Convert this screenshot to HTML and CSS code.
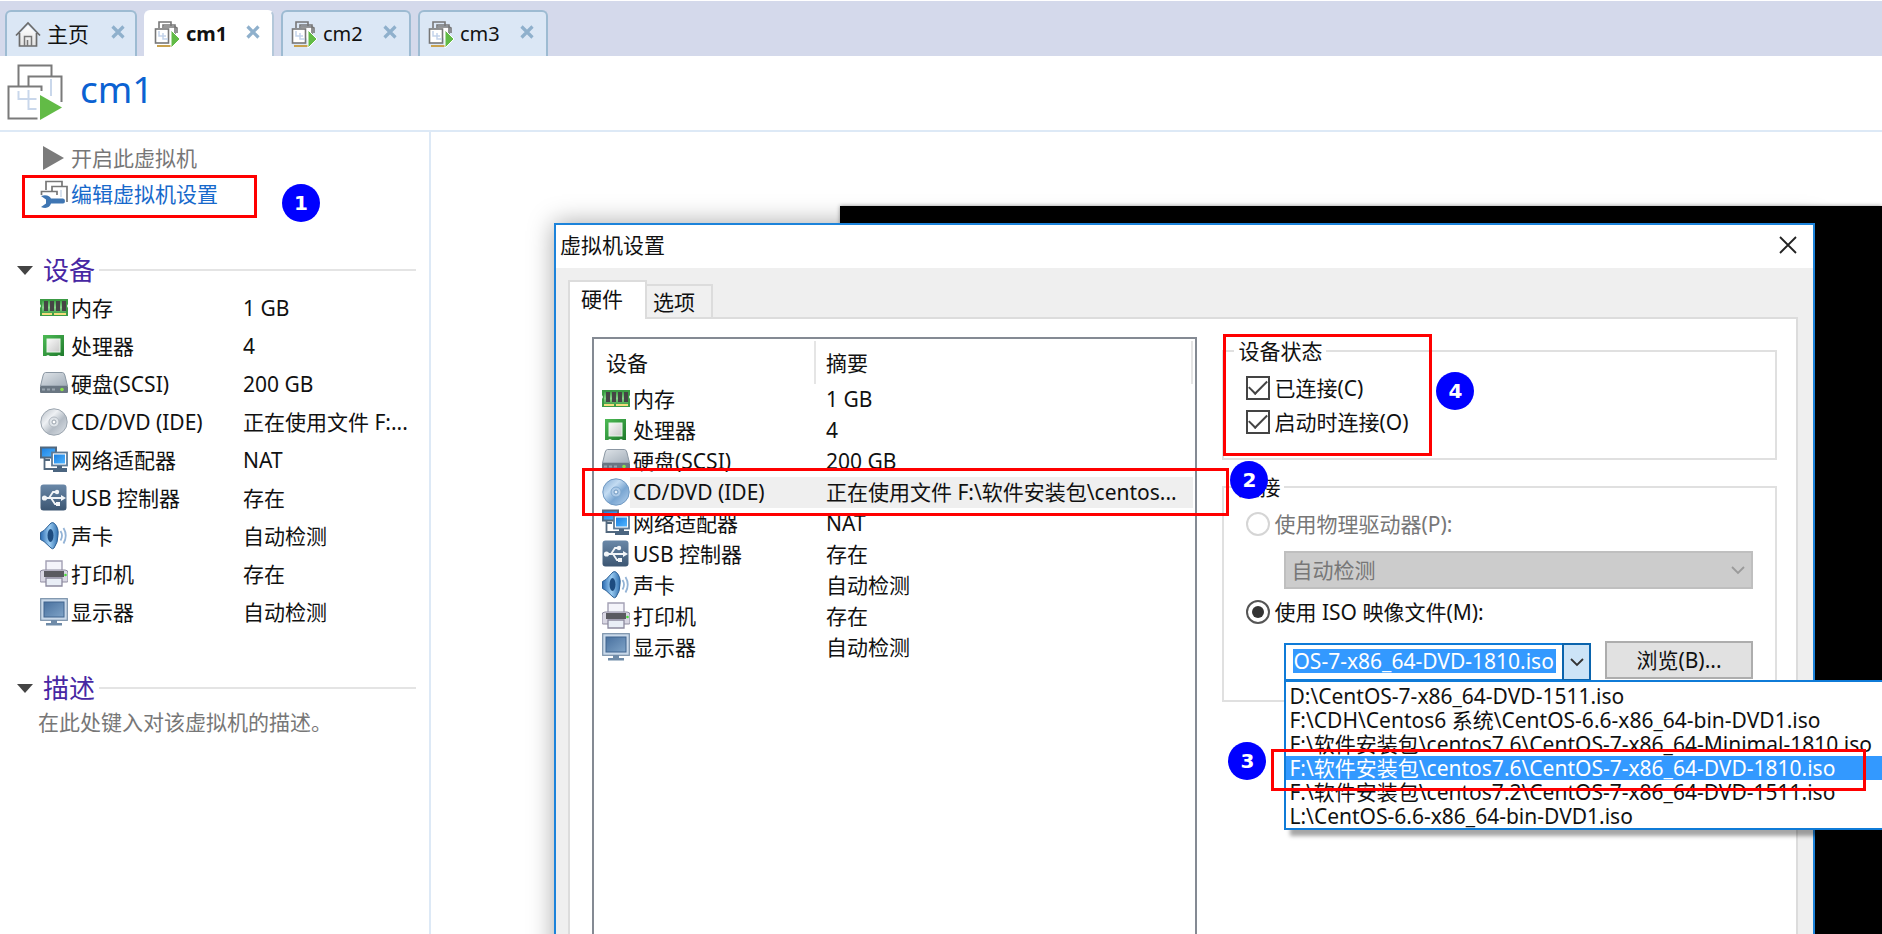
FILE: index.html
```html
<!DOCTYPE html>
<html lang="zh-CN">
<head>
<meta charset="utf-8">
<title>cm1 - 虚拟机设置</title>
<link rel="stylesheet" href="styles.css">
</head>
<body>
<svg class="sprite" width="0" height="0" aria-hidden="true">
  <defs>
    <linearGradient id="gHome" x1="0" y1="0" x2="0" y2="1"><stop offset="0" stop-color="#fff"/><stop offset="1" stop-color="#e3e3e3"/></linearGradient>
    <linearGradient id="gGreen" x1="0" y1="0" x2="1" y2="1"><stop offset="0" stop-color="#4dbb55"/><stop offset="1" stop-color="#1f7a2c"/></linearGradient>
    <linearGradient id="gMem" x1="0" y1="0" x2="0" y2="1"><stop offset="0" stop-color="#3fa548"/><stop offset=".5" stop-color="#86d488"/><stop offset="1" stop-color="#3a9a43"/></linearGradient>
    <linearGradient id="gChip" x1="0" y1="0" x2="1" y2="1"><stop offset="0" stop-color="#fafafa"/><stop offset="1" stop-color="#c9c9c9"/></linearGradient>
    <linearGradient id="gDisk" x1="0" y1="0" x2="1" y2="1"><stop offset="0" stop-color="#dfe4e9"/><stop offset="1" stop-color="#a3aeb9"/></linearGradient>
    <linearGradient id="gCd" x1="0" y1="0" x2="1" y2="1"><stop offset="0" stop-color="#b4bbc3"/><stop offset=".35" stop-color="#eef1f4"/><stop offset=".6" stop-color="#b4bcc5"/><stop offset="1" stop-color="#dfe4e9"/></linearGradient>
    <linearGradient id="gCdSel" x1="0" y1="0" x2="1" y2="1"><stop offset="0" stop-color="#7ea8d2"/><stop offset=".35" stop-color="#c4dcf2"/><stop offset=".6" stop-color="#7aa6d2"/><stop offset="1" stop-color="#b5d2ee"/></linearGradient>
    <linearGradient id="gBlue" x1="0" y1="0" x2="1" y2="1"><stop offset="0" stop-color="#1b7fe0"/><stop offset="1" stop-color="#4fb4ff"/></linearGradient>
    <linearGradient id="gUsb" x1="0" y1="0" x2="0" y2="1"><stop offset="0" stop-color="#6a88a8"/><stop offset="1" stop-color="#3c5672"/></linearGradient>
    <linearGradient id="gSnd" x1="0" y1="0" x2="1" y2="0"><stop offset="0" stop-color="#2b6cb3"/><stop offset=".5" stop-color="#9ccdf3"/><stop offset="1" stop-color="#2f6faf"/></linearGradient>
    <linearGradient id="gScr" x1="0" y1="0" x2="1" y2="1"><stop offset="0" stop-color="#49719f"/><stop offset="1" stop-color="#7fa3c7"/></linearGradient>
  </defs>
  <symbol id="i-home" viewBox="0 0 26 26">
    <path d="M4.500 13v12h17V13L13 4.500z" fill="url(#gHome)"/>
    <path d="M1 14.500 13 2l12 12.500M4.500 12v13h17V12" fill="none" stroke="#6b6b6b" stroke-width="1.700"/>
    <path d="M9.500 25v-9.500h7V25M12.500 25v-6" fill="none" stroke="#777" stroke-width="1.500"/>
  </symbol>
  <symbol id="i-vm" viewBox="0 0 26 28">
    <path d="M5 8V2h12v4M9 8V5h12v2l2 1v5" fill="none" stroke="#777" stroke-width="1.600"/>
    <path d="M10 7h11v14h-4" fill="#fff" stroke="#777" stroke-width="1.600"/>
    <rect x="1.500" y="9" width="13" height="14" fill="#fff" stroke="#777" stroke-width="1.600"/>
    <path d="M5 11v5h7M9 13v6h5" fill="none" stroke="#c3d3ea" stroke-width="1.500"/>
    <path d="M3 26h14" stroke="#c9a14c" stroke-width="2"/>
    <path d="M17 10v18l9-9z" fill="#62bb46" stroke="#fff" stroke-width="1"/>
  </symbol>
  <symbol id="i-vm-big" viewBox="0 0 56 56">
    <path d="M11.500 22V1.500h33V12" fill="none" stroke="#7a7a7a" stroke-width="2"/>
    <path d="M21.500 22V12.500h33V38" fill="none" stroke="#7a7a7a" stroke-width="2"/>
    <path d="M44 15v17" stroke="#c9d7eb" stroke-width="2"/>
    <path d="M34.500 27v-4.500h-33v32h29" fill="none" stroke="#7a7a7a" stroke-width="2"/>
    <path d="M11.500 27v8h18M21.500 26v19h8" fill="none" stroke="#c9d7eb" stroke-width="2"/>
    <path d="M33 31v25l22-12.500z" fill="#62bb46"/>
  </symbol>
  <symbol id="i-close" viewBox="0 0 14 14"><path d="M1.500 1.500l11 11M12.500 1.500l-11 11" stroke="#8fb0cc" stroke-width="3.200"/></symbol>
  <symbol id="i-play" viewBox="0 0 28 28"><path d="M3 2v24l21-12z" fill="#7b7b7b"/></symbol>
  <symbol id="i-edit" viewBox="0 0 28 28">
    <path d="M6 10V1.500h16V7M12 12V6.500h15V22M1.500 15v-3.500H17V15" fill="none" stroke="#777" stroke-width="1.700"/>
    <path d="M21 10v7" stroke="#cbd8ea" stroke-width="1.500"/>
    <path d="M1 16c5-2 9 0 10 2.500h12q2 0 2 2.500t-2 2.500H11c-1 4-5 5.500-10 3.500l5-3.500v-4z" fill="#3f76b3"/>
  </symbol>
  <symbol id="i-mem" viewBox="0 0 28 28">
    <path d="M0 5h28v5l-1 2 1 2v8H0v-8l1-2-1-2z" fill="#3b9a44"/>
    <path d="M2 7h24v13H2z" fill="url(#gMem)"/>
    <path d="M4 7h4v10H4zM10 7h4v10h-4zM16 7h4v10h-4zM22 7h4v10h-4z" fill="#454545"/>
    <path d="M2 20h10M14 20h12" stroke="#f3dc7c" stroke-width="2"/>
  </symbol>
  <symbol id="i-cpu" viewBox="0 0 28 28">
    <path d="M3 3h21v21h-3l-2-1-2 1h-7l-2-1-2 1H3z" fill="url(#gGreen)"/>
    <rect x="7" y="7" width="13" height="13" fill="url(#gChip)" stroke="#e8f5e8" stroke-width="1"/>
  </symbol>
  <symbol id="i-disk" viewBox="0 0 28 28">
    <path d="M5.500 2.500h17q1.500 0 2.300 2.500l2.700 11H.5L3.200 5q.8-2.500 2.300-2.500z" fill="url(#gDisk)" stroke="#8b97a3" stroke-width="1"/>
    <rect x="0" y="16" width="28" height="7" rx="1" fill="#6a7682"/>
    <path d="M2 19.500h14" stroke="#98a3ae" stroke-width="2" stroke-dasharray="3 2"/>
    <circle cx="22" cy="19.500" r="1.800" fill="#8be04a"/>
  </symbol>
  <symbol id="i-cd" viewBox="0 0 28 28">
    <circle cx="14" cy="14" r="13.200" fill="url(#gCd)" stroke="#9aa4ae" stroke-width="1"/>
    <circle cx="14" cy="14" r="5" fill="#dfe4e9" stroke="#b3bac2"/><circle cx="14" cy="14" r="2" fill="#fff" stroke="#98a1ab"/>
  </symbol>
  <symbol id="i-cdsel" viewBox="0 0 28 28">
    <circle cx="14" cy="14" r="13.200" fill="url(#gCdSel)" stroke="#6f98c2" stroke-width="1"/>
    <circle cx="14" cy="14" r="5" fill="#aecbe8" stroke="#7fa8d0"/><circle cx="14" cy="14" r="2" fill="#e6f1fb" stroke="#6e97c0"/>
  </symbol>
  <symbol id="i-net" viewBox="0 0 28 28">
    <rect x="1" y="1.500" width="15" height="10" fill="url(#gBlue)" stroke="#52687e" stroke-width="2"/>
    <path d="M4.500 12v11h9" fill="none" stroke="#52687e" stroke-width="1.800"/>
    <path d="M5 14h5" stroke="#52687e" stroke-width="2"/>
    <rect x="12" y="6.500" width="15" height="13" fill="#fff" stroke="#5e7a96" stroke-width="1.800"/>
    <rect x="14" y="8.500" width="11" height="9" fill="url(#gBlue)"/>
    <path d="M17 20h5v2h5v4H13v-4h4z" fill="#4b6580"/>
  </symbol>
  <symbol id="i-usb" viewBox="0 0 28 28">
    <rect x=".5" y=".5" width="26" height="26" rx="3" fill="url(#gUsb)"/>
    <path d="M5 14h17M9 14l4-6h4M11 14l4 6h3" fill="none" stroke="#f2f5f8" stroke-width="1.800"/>
    <circle cx="4.500" cy="14" r="2.600" fill="#f2f5f8"/><circle cx="17" cy="8" r="2.200" fill="#f2f5f8"/><path d="M16 18h4v4h-4zM21 11l5 3-5 3z" fill="#f2f5f8"/>
  </symbol>
  <symbol id="i-snd" viewBox="0 0 28 28">
    <path d="M.5 10.500L4 8.500 11 1q2-1 3.500.5Q19 6 18 13.500q0 7-4 12.500-1.500 1.500-3 0L4 19.500l-3.500-2z" fill="url(#gSnd)" stroke="#2b5f95" stroke-width="1"/>
    <ellipse cx="10.500" cy="13.500" rx="3" ry="6.500" fill="#1d4c80"/>
    <path d="M20.500 9q3 4.500 0 9.500M23.500 6q4.500 7.500 0 15.500" fill="none" stroke="#93b3d6" stroke-width="1.800"/>
  </symbol>
  <symbol id="i-prn" viewBox="0 0 28 28">
    <path d="M6 1h16v11H6z" fill="#f4f4fa" stroke="#a3a0b4" stroke-width="1.400"/>
    <path d="M3 10h22q3 0 3 3v8q0 1-1 1H1q-1 0-1-1v-8q0-3 3-3z" fill="#d9d7e3" stroke="#8d8a9f" stroke-width="1"/>
    <path d="M4 11h20v6H4z" fill="#5a5a60"/>
    <path d="M6 18h16v8H6z" fill="#e9eef6" stroke="#8d8a9f" stroke-width="1.300"/>
    <circle cx="25.500" cy="15" r="1.300" fill="#4bdc3c"/>
  </symbol>
  <symbol id="i-mon" viewBox="0 0 28 28">
    <rect x=".7" y=".7" width="26.600" height="21.600" fill="#c9d9ea" stroke="#7890a8" stroke-width="1.200"/>
    <rect x="4" y="4" width="20" height="15" fill="url(#gScr)" stroke="#41658e" stroke-width="1"/>
    <path d="M11 22h6v3h5v2.500H6V25h5z" fill="#6f8ba8"/>
  </symbol>
</svg>

<nav class="tabs">
  <a class="tab home" href="#home"><svg class="tab-icon"><use href="#i-home"/></svg><span>主页</span><button class="tab-close" type="button" aria-label="关闭"><svg><use href="#i-close"/></svg></button></a>
  <a class="tab active" href="#cm1"><svg class="tab-icon"><use href="#i-vm"/></svg><span>cm1</span><button class="tab-close" type="button" aria-label="关闭"><svg><use href="#i-close"/></svg></button></a>
  <a class="tab" href="#cm2"><svg class="tab-icon"><use href="#i-vm"/></svg><span>cm2</span><button class="tab-close" type="button" aria-label="关闭"><svg><use href="#i-close"/></svg></button></a>
  <a class="tab" href="#cm3"><svg class="tab-icon"><use href="#i-vm"/></svg><span>cm3</span><button class="tab-close" type="button" aria-label="关闭"><svg><use href="#i-close"/></svg></button></a>
</nav>

<header class="vm-header">
  <svg class="vm-logo"><use href="#i-vm-big"/></svg>
  <h1>cm1</h1>
</header>

<div class="workspace">
  <aside class="sidebar">
    <div class="commands">
      <a class="command muted" href="#start"><svg class="dev-icon"><use href="#i-play"/></svg>开启此虚拟机</a>
      <div class="marked-command">
        <a class="command" href="#edit"><svg class="dev-icon"><use href="#i-edit"/></svg>编辑虚拟机设置</a>
        <span class="mark mark-1"></span><span class="badge badge-1">1</span>
      </div>
    </div>
    <h2 class="section"><i></i>设备</h2>
    <table class="summary">
      <tr><th><svg class="dev-icon"><use href="#i-mem"/></svg>内存</th><td>1 GB</td></tr>
      <tr><th><svg class="dev-icon"><use href="#i-cpu"/></svg>处理器</th><td>4</td></tr>
      <tr><th><svg class="dev-icon"><use href="#i-disk"/></svg>硬盘(SCSI)</th><td>200 GB</td></tr>
      <tr><th><svg class="dev-icon"><use href="#i-cd"/></svg>CD/DVD (IDE)</th><td>正在使用文件 F:...</td></tr>
      <tr><th><svg class="dev-icon"><use href="#i-net"/></svg>网络适配器</th><td>NAT</td></tr>
      <tr><th><svg class="dev-icon"><use href="#i-usb"/></svg>USB 控制器</th><td>存在</td></tr>
      <tr><th><svg class="dev-icon"><use href="#i-snd"/></svg>声卡</th><td>自动检测</td></tr>
      <tr><th><svg class="dev-icon"><use href="#i-prn"/></svg>打印机</th><td>存在</td></tr>
      <tr><th><svg class="dev-icon"><use href="#i-mon"/></svg>显示器</th><td>自动检测</td></tr>
    </table>
    <h2 class="section"><i></i>描述</h2>
    <p class="description">在此处键入对该虚拟机的描述。</p>
  </aside>

  <main class="stage">
    <div class="console"></div>
    <section class="dialog" role="dialog" aria-labelledby="dlg-title">
      <div class="titlebar">
        <span id="dlg-title">虚拟机设置</span>
        <button class="dlg-close" type="button" aria-label="关闭"><svg viewBox="0 0 18 18"><path d="M1 1l16 16M17 1L1 17" stroke="#222" stroke-width="1.800"/></svg></button>
      </div>
      <div class="dlg-tabs" role="tablist">
        <button class="dlg-tab current" type="button" role="tab" aria-selected="true">硬件</button>
        <button class="dlg-tab" type="button" role="tab" aria-selected="false">选项</button>
      </div>
      <div class="panel">
        <div class="device-box">
          <table class="devices">
            <thead><tr><th>设备</th><th>摘要</th></tr></thead>
            <tbody>
              <tr><td><svg class="dev-icon"><use href="#i-mem"/></svg>内存</td><td>1 GB</td></tr>
              <tr><td><svg class="dev-icon"><use href="#i-cpu"/></svg>处理器</td><td>4</td></tr>
              <tr><td><svg class="dev-icon"><use href="#i-disk"/></svg>硬盘(SCSI)</td><td>200 GB</td></tr>
              <tr class="selected"><td><svg class="dev-icon"><use href="#i-cdsel"/></svg>CD/DVD (IDE)</td><td>正在使用文件 F:\软件安装包\centos...</td></tr>
              <tr><td><svg class="dev-icon"><use href="#i-net"/></svg>网络适配器</td><td>NAT</td></tr>
              <tr><td><svg class="dev-icon"><use href="#i-usb"/></svg>USB 控制器</td><td>存在</td></tr>
              <tr><td><svg class="dev-icon"><use href="#i-snd"/></svg>声卡</td><td>自动检测</td></tr>
              <tr><td><svg class="dev-icon"><use href="#i-prn"/></svg>打印机</td><td>存在</td></tr>
              <tr><td><svg class="dev-icon"><use href="#i-mon"/></svg>显示器</td><td>自动检测</td></tr>
            </tbody>
          </table>
          <span class="mark mark-2"></span><span class="badge badge-2">2</span>
        </div>
        <div class="groups">
          <div class="marked-group">
            <fieldset class="group">
              <legend>设备状态</legend>
              <label class="option"><input type="checkbox" checked>已连接(C)</label>
              <label class="option"><input type="checkbox" checked>启动时连接(O)</label>
            </fieldset>
            <span class="mark mark-4"></span><span class="badge badge-4">4</span>
          </div>
          <fieldset class="group">
            <legend>连接</legend>
            <label class="option off"><input type="radio" name="source" disabled>使用物理驱动器(P):</label>
            <div class="drive">
              <select disabled aria-label="物理驱动器"><option>自动检测</option></select>
              <svg class="chevron" viewBox="0 0 14 10"><path d="M1 2l6 6 6-6" fill="none" stroke="#9a9a9a" stroke-width="1.800"/></svg>
            </div>
            <label class="option"><input type="radio" name="source" checked>使用 ISO 映像文件(M):</label>
            <div class="iso-row">
              <div class="combo">
                <input type="text" value="OS-7-x86_64-DVD-1810.iso" aria-label="ISO 映像文件">
                <button type="button" aria-label="展开"><svg viewBox="0 0 14 10"><path d="M1 2l6 6 6-6" fill="none" stroke="#333" stroke-width="1.800"/></svg></button>
                <ul class="menu" role="listbox">
                  <li role="option">D:\CentOS-7-x86_64-DVD-1511.iso</li>
                  <li role="option">F:\CDH\Centos6 系统\CentOS-6.6-x86_64-bin-DVD1.iso</li>
                  <li role="option">F:\软件安装包\centos7.6\CentOS-7-x86_64-Minimal-1810.iso</li>
                  <li role="option" class="chosen" aria-selected="true"><span>F:\软件安装包\centos7.6\CentOS-7-x86_64-DVD-1810.iso<b class="mark mark-3"></b><b class="badge badge-3">3</b></span></li>
                  <li role="option">F:\软件安装包\centos7.2\CentOS-7-x86_64-DVD-1511.iso</li>
                  <li role="option">L:\CentOS-6.6-x86_64-bin-DVD1.iso</li>
                </ul>
              </div>
              <button class="browse" type="button">浏览(B)...</button>
            </div>
          </fieldset>
        </div>
      </div>
    </section>
  </main>
</div>
</body>
</html>
```
FILE: styles.css
```css
* { box-sizing: border-box; }

body {
  margin: 0;
  min-height: 100vh;
  display: flex;
  flex-direction: column;
  overflow: hidden;
  background: #fff;
  color: #111;
  font: 20px/28px "Noto Sans", "Noto Sans CJK SC", sans-serif;
}

button, input, select { font: inherit; color: inherit; }
a { color: inherit; text-decoration: none; }
.sprite { position: absolute; }

/* Document tabs */
.tabs {
  display: flex;
  align-items: flex-end;
  gap: 7px;
  height: 56px;
  padding-left: 5px;
  background: #d4d9eb;
  border-top: 1px solid #fff;
}
.tab {
  display: flex;
  align-items: center;
  width: 130px;
  height: 46px;
  padding: 0 12px 0 8px;
  gap: 6px;
  background: #dbe7f5;
  border: 2px solid #9dbbd2;
  border-bottom: 0;
  border-radius: 6px 6px 0 0;
}
.tab.home { width: 132px; padding-right: 10px; font-size: 21px; }
.tab.active {
  background: #fff;
  border-color: #fff #b4c8da #fff #fff;
  font-weight: bold;
}
.tab-icon { width: 26px; height: 28px; flex: none; }
.tab-close {
  display: flex;
  margin-left: auto;
  padding: 0 0 4px;
  border: 0;
  background: none;
}
.tab-close svg { width: 14px; height: 14px; }

/* Machine header */
.vm-header {
  display: flex;
  align-items: center;
  gap: 17px;
  height: 76px;
  padding: 0 7px 2px;
  border-bottom: 2px solid #dde9f6;
}
.vm-logo { width: 56px; height: 56px; }
h1 {
  margin: 0;
  padding-bottom: 6px;
  color: #0b62d2;
  font-size: 37px;
  font-weight: normal;
  line-height: 48px;
}

.workspace { flex: 1; display: flex; min-height: 0; }

/* Sidebar */
.sidebar {
  width: 431px;
  flex: none;
  padding-top: 8px;
  border-right: 2px solid #dde9f6;
}
.dev-icon {
  width: 28px;
  height: 28px;
  margin-right: 3px;
  vertical-align: middle;
  flex: none;
}
.commands { padding-left: 40px; margin-bottom: 40px; font-size: 21px; }
.command { display: flex; align-items: center; width: max-content; height: 36px; color: #1769cb; }
.command.muted { color: #777; }
.marked-command { position: relative; }

.section {
  display: flex;
  align-items: center;
  height: 36px;
  margin: 0;
  padding: 0 13px 0 17px;
  color: #4727a3;
  font-size: 26px;
  font-weight: normal;
}
.section i {
  margin-right: 10px;
  border: 8px solid transparent;
  border-top: 9px solid #444;
  border-bottom: 0;
}
.section::after {
  content: "";
  flex: 1;
  height: 2px;
  margin-left: 4px;
  background: #e4e4e4;
}
.summary {
  margin: 1px 0 39px 40px;
  border-spacing: 0;
  font-size: 21px;
}
.summary th, .summary td {
  height: 38px;
  padding: 0;
  font-weight: normal;
  text-align: left;
  white-space: nowrap;
}
.summary th { width: 203px; }
.summary .dev-icon { margin-top: -4px; }
.description { margin: 2px 0 0 38px; color: #777; font-size: 21px; }

/* Stage */
.stage { position: relative; flex: 1; overflow: hidden; }
.console {
  position: absolute;
  inset: 74px 0 0 409px;
  background: #000;
  box-shadow: 0 0 4px rgba(0, 0, 0, .4);
}
.dialog {
  position: absolute;
  inset: 91px 67px -40px 123px;
  display: flex;
  flex-direction: column;
  background: #efefef;
  border: 2px solid #1c83da;
  box-shadow: 0 0 24px rgba(0, 0, 0, .35);
  font-size: 21px;
}
.titlebar {
  display: flex;
  align-items: center;
  justify-content: space-between;
  height: 43px;
  padding: 0 16px 3px 4px;
  background: #fff;
}
.dlg-close { display: flex; padding: 0; border: 0; background: none; }
.dlg-close svg { width: 18px; height: 18px; }

.dlg-tabs { display: flex; align-items: flex-end; padding: 12px 0 0 12px; }
.dlg-tab {
  height: 33px;
  padding: 0 16px 0 6px;
  border: 2px solid #dcdcdc;
  border-width: 2px 2px 0 0;
  background: #f0f0f0;
  line-height: 28px;
}
.dlg-tab.current {
  position: relative;
  height: 39px;
  padding: 0 22px 4px 11px;
  margin-bottom: -2px;
  border-width: 2px 2px 0;
  background: #fff;
}
.panel {
  flex: 1;
  display: grid;
  grid-template-columns: 606fr 555fr;
  gap: 25px;
  margin: 0 15px 12px 12px;
  padding: 18px 19px 20px 22px;
  background: #fff;
  border: 2px solid #dcdcdc;
}

/* Device list */
.device-box { position: relative; border: 2px solid #848a93; padding: 2px 2px 0 6px; }
.devices { width: 100%; border-spacing: 0; table-layout: fixed; }
.devices th {
  height: 43px;
  padding: 0 0 0 6px;
  border-right: 2px solid #e5e5e5;
  font-weight: normal;
  text-align: left;
}
.devices th:first-child { width: 216px; }
.devices th:last-child { padding-left: 10px; }
.devices td { height: 31px; padding: 0; line-height: 31px; white-space: nowrap; }
.devices td:first-child { padding-left: 2px; }
.devices td:last-child { padding-left: 10px; }
.devices .dev-icon { margin: -4px 3px 0 0; }
.selected td { background: #efefef; }
.selected td:first-child { background: linear-gradient(90deg, #fff 30px, #efefef 30px); }

/* Settings groups */
.groups { display: flex; flex-direction: column; gap: 13px; min-width: 0; }
.marked-group { position: relative; }
.group {
  min-width: 0;
  margin: 0;
  padding: 6px 22px 19px;
  border: 2px solid #e0e0e0;
}
.group legend { margin-left: -12px; padding: 0 4px; }
.option { display: flex; align-items: center; gap: 4px; width: max-content; height: 34px; }
.option.off { color: #777; }
.option input {
  appearance: none;
  display: grid;
  place-items: center;
  width: 24px;
  height: 24px;
  margin: 0;
  border: 2px solid #444;
  background: #fff;
}
.option input[type="checkbox"]::before {
  content: "";
  width: 16px;
  height: 8px;
  margin-top: -6px;
  border: solid #444;
  border-width: 0 0 2px 2px;
  transform: rotate(-45deg);
}
.option input[type="radio"] { border-radius: 50%; border-color: #555; }
.option input[type="radio"]:checked::before {
  content: "";
  width: 12px;
  height: 12px;
  border-radius: 50%;
  background: #333;
}
.option input[type="radio"]:disabled { border-color: #d5d5d5; }

.drive { position: relative; margin: 10px 0 6px 38px; }
.drive select {
  appearance: none;
  display: block;
  width: 100%;
  height: 38px;
  padding: 0 5px;
  border: 2px solid #bfbfbf;
  border-radius: 0;
  background: #ccc;
  color: #777;
  opacity: 1;
}
.chevron { position: absolute; right: 8px; top: 14px; width: 14px; height: 10px; }

.iso-row { display: flex; gap: 14px; margin: 12px 0 0 38px; }
.combo {
  position: relative;
  flex: 1;
  display: flex;
  min-width: 0;
  height: 38px;
  margin-top: 2px;
  border: 2px solid #0f7bd7;
  background: #fff;
}
.combo input {
  flex: 1;
  min-width: 0;
  height: 24px;
  margin: 4px 8px 0 7px;
  padding: 0;
  border: 0;
  background: #3399ff;
  color: #fff;
  line-height: 24px;
}
.combo button {
  display: grid;
  place-items: center;
  width: 29px;
  margin: -2px;
  padding: 0;
  border: 2px solid #0a64ad;
  background: #cce4f7;
}
.combo button svg { width: 14px; height: 10px; }
.browse {
  width: 148px;
  height: 38px;
  padding: 0;
  border: 2px solid #adadad;
  background: #e1e1e1;
}
.menu {
  position: absolute;
  z-index: 2;
  top: 35px;
  left: -2px;
  min-width: 640px;
  margin: 0;
  padding: 2px 0 0;
  border: 2px solid #0f7bd7;
  background: #fff;
  box-shadow: 6px 6px 4px rgba(0, 0, 0, .35);
  list-style: none;
}
.menu li { height: 24px; padding: 0 40px 0 3px; line-height: 24px; white-space: nowrap; }
.menu .chosen { background: #3399ff; color: #fff; }
.menu .chosen span { position: relative; display: inline-block; height: 24px; }

/* Step callouts */
.mark { position: absolute; z-index: 3; border: 3px solid #f00; pointer-events: none; }
.badge {
  position: absolute;
  z-index: 4;
  width: 38px;
  height: 38px;
  border-radius: 50%;
  background: #00f;
  color: #fff;
  font: bold 20px/38px "DejaVu Sans", sans-serif;
  text-align: center;
}
.mark-1 { left: -18px; top: -1px; width: 235px; height: 43px; }
.badge-1 { left: 242px; top: 8px; }
.mark-2 { left: -12px; right: -34px; top: 129px; height: 48px; }
.badge-2 { right: -73px; top: 122px; }
.mark-4 { left: 1px; top: -3px; width: 209px; height: 122px; }
.badge-4 { left: 214px; top: 35px; }
.mark-3 { left: -18px; right: -31px; top: -7px; height: 42px; }
.badge-3 { left: -61px; top: -14px; }
```
